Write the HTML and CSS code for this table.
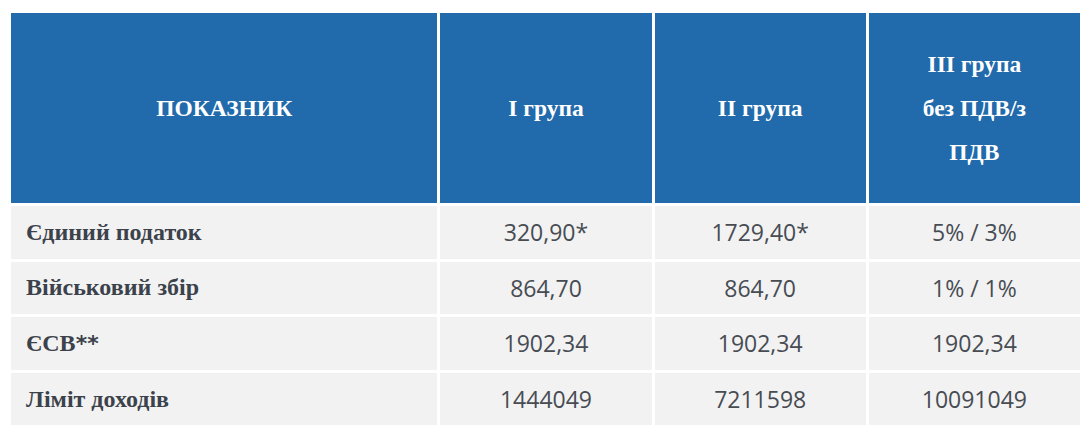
FILE: index.html
```html
<!DOCTYPE html>
<html lang="uk">
<head>
<meta charset="utf-8">
<link rel="stylesheet" href="styles.css">
</head>
<body>
<table class="tax">
  <colgroup>
    <col class="c-name">
    <col class="c-val">
    <col class="c-val">
    <col class="c-val">
  </colgroup>
  <thead>
    <tr>
      <th>ПОКАЗНИК</th>
      <th>I група</th>
      <th>II група</th>
      <th>III група<br>без ПДВ/з<br>ПДВ</th>
    </tr>
  </thead>
  <tbody>
    <tr><td class="name">Єдиний податок</td><td>320,90*</td><td>1729,40*</td><td>5% / 3%</td></tr>
    <tr><td class="name">Військовий збір</td><td>864,70</td><td>864,70</td><td>1% / 1%</td></tr>
    <tr><td class="name">ЄСВ<span class="stars">**</span></td><td>1902,34</td><td>1902,34</td><td>1902,34</td></tr>
    <tr><td class="name">Ліміт доходів</td><td>1444049</td><td>7211598</td><td>10091049</td></tr>
  </tbody>
</table>
</body>
</html>
```

FILE: styles.css
```css
html, body {
  background: #ffffff;
}
body {
  margin: 10px 0 0 8px;
}
.tax {
  border-collapse: separate;
  border-spacing: 3px;
  width: 1075px;
  table-layout: fixed;
}
.c-name { width: 426px; }
.c-val { width: 211px; }
.tax th {
  background: #216aab;
  color: #ffffff;
  font-family: "Liberation Serif", "Times New Roman", serif;
  font-weight: bold;
  font-size: 23.5px;
  line-height: 44px;
  height: 190px;
  padding: 0;
  text-align: center;
  vertical-align: middle;
}
.tax td {
  background: #f2f2f2;
  height: 52.6px;
  padding: 0;
  text-align: center;
  vertical-align: middle;
  font-family: "Open Sans", sans-serif;
  font-size: 23px;
  color: #474c53;
}
.tax td.name {
  text-align: left;
  padding-left: 15px;
  font-family: "Liberation Serif", "Times New Roman", serif;
  font-weight: bold;
  font-size: 24px;
  color: #3c424b;
}
.tax td.name .stars {
  font-family: "DejaVu Sans", sans-serif;
  font-size: 22px;
}
```
